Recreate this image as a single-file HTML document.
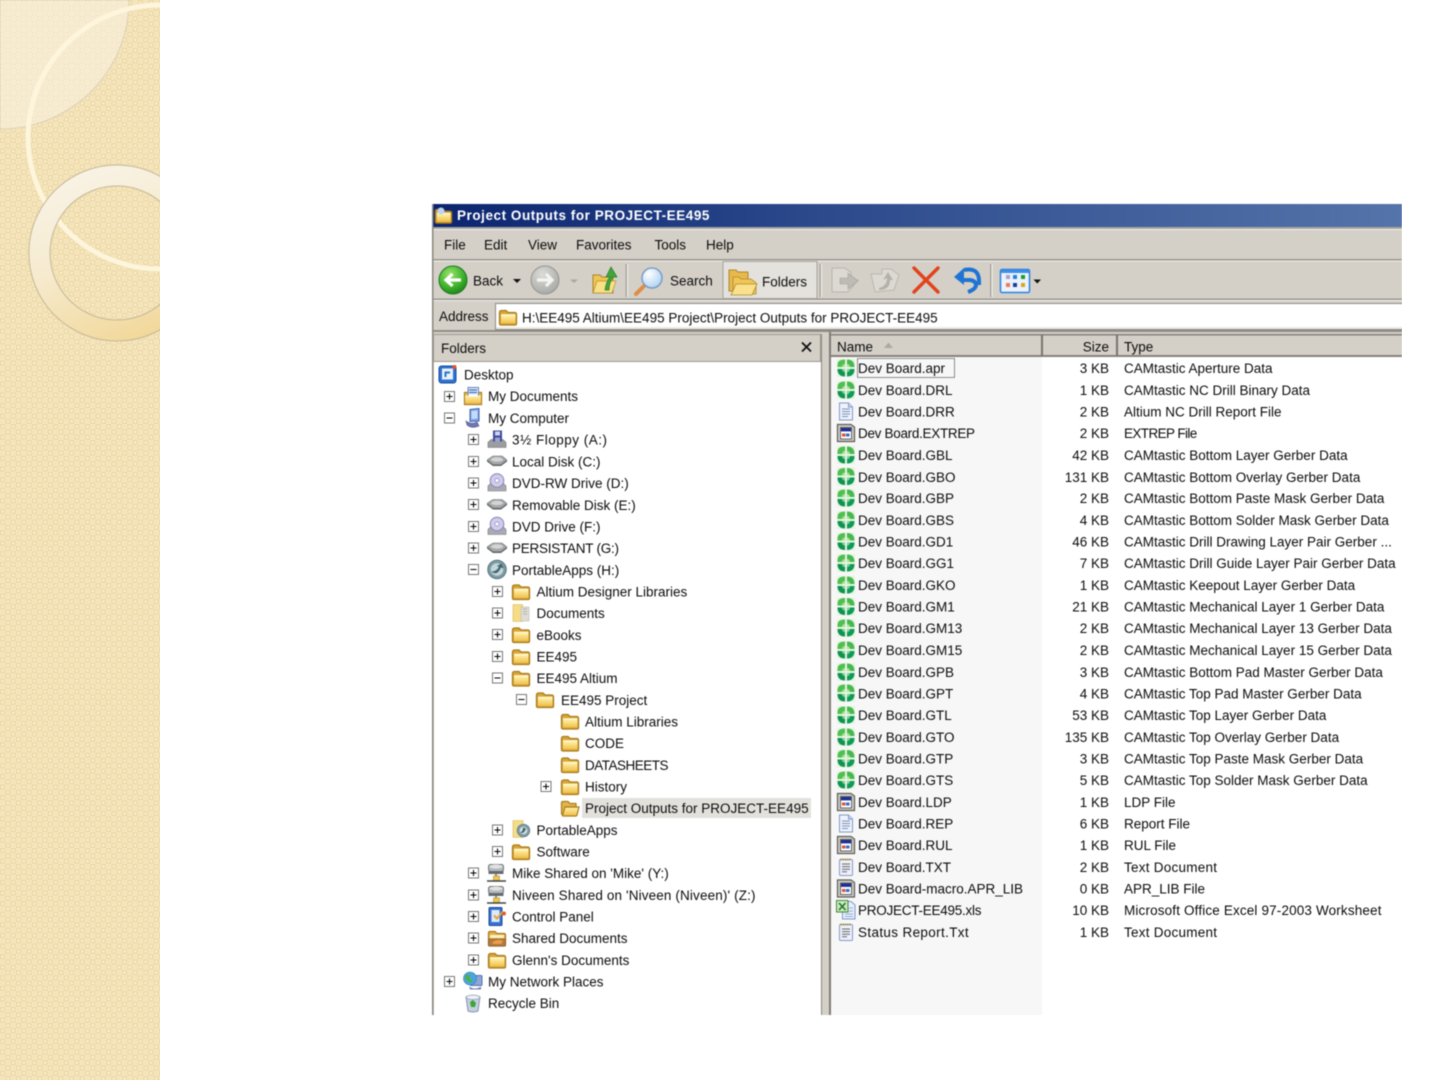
<!DOCTYPE html>
<html><head><meta charset="utf-8"><title>Project Outputs for PROJECT-EE495</title>
<style>
html,body{margin:0;padding:0;background:#fff;width:1440px;height:1080px;overflow:hidden}
svg{display:block}
text{font-family:"Liberation Sans",sans-serif;font-size:13.5px;fill:#0c0c0c;white-space:pre}
.r{text-anchor:end}
</style></head><body>
<svg width="1440" height="1080" viewBox="0 0 1440 1080" xmlns="http://www.w3.org/2000/svg">
<defs>
<filter id="soft" filterUnits="userSpaceOnUse" x="420" y="195" width="990" height="830" color-interpolation-filters="sRGB"><feGaussianBlur stdDeviation="0.4"/></filter>
<filter id="soft2" filterUnits="userSpaceOnUse" x="-5" y="-5" width="170" height="1090" color-interpolation-filters="sRGB"><feGaussianBlur stdDeviation="0.5"/></filter>
<pattern id="bg" width="10.6" height="10.6" patternUnits="userSpaceOnUse">
<rect width="10.6" height="10.6" fill="#f4e4bb"/>
<rect x="0" y="0" width="5.3" height="5.3" fill="#efdcab"/>
<rect x="5.3" y="5.3" width="5.3" height="5.3" fill="#efdcab"/>
<rect x="1.5" y="1.5" width="2.3" height="2.3" fill="#f7e9c8"/>
<rect x="6.8" y="6.8" width="2.3" height="2.3" fill="#f7e9c8"/>
</pattern>
<linearGradient id="ring" x1="0.2" y1="0" x2="0.6" y2="1"><stop offset="0" stop-color="#f9f4e8"/><stop offset=".5" stop-color="#f6ebcf"/><stop offset="1" stop-color="#f2d89a"/></linearGradient>
<linearGradient id="title" x1="0" x2="1" y1="0" y2="0"><stop offset="0" stop-color="#0b2470"/><stop offset=".4" stop-color="#2c4a8c"/><stop offset="1" stop-color="#5574aa"/></linearGradient>
<linearGradient id="fo" x1="0" y1="0" x2="0" y2="1"><stop offset="0" stop-color="#fff0a8"/><stop offset="1" stop-color="#f0bf48"/></linearGradient>
<radialGradient id="gb" cx=".4" cy=".3" r=".8"><stop offset="0" stop-color="#9be36a"/><stop offset=".6" stop-color="#3cb02c"/><stop offset="1" stop-color="#17761a"/></radialGradient>
<radialGradient id="gy" cx=".4" cy=".3" r=".8"><stop offset="0" stop-color="#dcdcd8"/><stop offset="1" stop-color="#a3a3a0"/></radialGradient>
<radialGradient id="mg" cx=".35" cy=".3" r=".8"><stop offset="0" stop-color="#ffffff"/><stop offset="1" stop-color="#a8cff2"/></radialGradient>
<pattern id="dit" width="2" height="2" patternUnits="userSpaceOnUse"><rect width="2" height="2" fill="#ecebe6"/><rect width="1" height="1" fill="#dcd9d2"/><rect x="1" y="1" width="1" height="1" fill="#dcd9d2"/></pattern>

<symbol id="p" viewBox="0 0 11 11" overflow="visible"><rect x=".5" y=".5" width="10" height="10" fill="#fff" stroke="#777"/><path d="M2.5 5.5h6M5.5 2.5v6" stroke="#000" fill="none"/></symbol>
<symbol id="m" viewBox="0 0 11 11" overflow="visible"><rect x=".5" y=".5" width="10" height="10" fill="#fff" stroke="#777"/><path d="M2.5 5.500h6" stroke="#000" fill="none"/></symbol>
<symbol id="f" viewBox="0 0 20 20"><path d="M1.500 16.500V6Q1.500 3.500 3.500 3.500H8L10 5.500H16.500Q18.500 5.500 18.500 7.500V16.500Q18.500 18 17 18H3Q1.500 18 1.500 16.500Z" fill="#d9a534" stroke="#a97c1f" stroke-width="1.300"/><path d="M3 8.500H17.500V16.500H3Z" fill="url(#fo)"/><path d="M3 8H17.500" stroke="#fff8d0" stroke-width="1.600"/></symbol>
<symbol id="fopen" viewBox="0 0 20 20"><path d="M1.500 16V5Q1.500 3.500 3 3.500H8L10 5.500H16V9H5.500L2.500 17Z" fill="#e3b548" stroke="#a97c1f" stroke-width="1.200"/><path d="M2.500 17.500 5 9H19L17 17Q16.800 18 15.500 18H3.500Q2.300 18 2.500 17.500Z" fill="url(#fo)" stroke="#a97c1f" stroke-width="1.200"/></symbol>
<symbol id="cam" viewBox="0 0 20 20"><rect x="1" y="1" width="18" height="18" fill="#e6f5e0"/><path d="M1.500 9V7Q1.500 1.500 9 1.500V9Z" fill="#4fbf4f"/><path d="M11 1.500Q18.500 1.500 18.500 9H11Z" fill="#47b84f"/><path d="M1.500 11H9V18.500Q1.500 18.500 1.500 11Z" fill="#0f9350"/><path d="M11 11H18.500Q18.500 18.500 11 18.500Z" fill="#0f9a58"/><path d="M6 9Q6 6 9 6V9ZM11 6Q14 6 14 9H11Z" fill="#a8e09a"/><path d="M6 11H9V14Q6 14 6 11ZM11 11H14Q14 14 11 14Z" fill="#7ed09a"/></symbol>
<symbol id="doc" viewBox="0 0 20 20"><path d="M3.500 1.500H12.500L16.500 5.500V18.500H3.500Z" fill="#eef3fd" stroke="#7e98ca"/><path d="M12.500 1.500V5.500H16.500" fill="#cfdaf0" stroke="#7e98ca"/><path d="M6 7.500H14M6 10H14M6 12.500H14M6 15H12" stroke="#7d90b3"/></symbol>
<symbol id="win" viewBox="0 0 20 20"><path d="M1.500 1.500H15L18.500 4V18.500H1.500Z" fill="#cfcdc6" stroke="#5c5b55" stroke-width="1.200"/><rect x="4.500" y="4.500" width="11" height="11.500" fill="#fff" stroke="#45433f" stroke-width=".8"/><rect x="5" y="5" width="10" height="3.400" fill="#1c2f96"/><rect x="6" y="10.500" width="3.500" height="3" fill="#d9523a"/><rect x="10" y="10.500" width="3.500" height="3" fill="#2c6fd4"/></symbol>
<symbol id="txt" viewBox="0 0 20 20"><rect x="3.500" y="2.500" width="13" height="16" rx="1.200" fill="#eef1fb" stroke="#8797cc"/><path d="M4.500 2.500H15.500" stroke="#a98f2c" stroke-width="2" stroke-dasharray="1.200 1"/><path d="M6 7H14M6 9.600H14M6 12.200H14M6 14.800H11" stroke="#666"/></symbol>
<symbol id="xls" viewBox="0 0 20 20"><path d="M6.500 1.500H15L19 5V19H6.500Z" fill="#e6eefb" stroke="#7d9acb"/><rect x=".5" y=".5" width="11.500" height="11.500" fill="#cfe7c3" stroke="#3c8a37"/><path d="M3 3 9.500 10M9.500 3 3 10" stroke="#1e7a22" stroke-width="1.600"/><path d="M13 8H17M13 11H17M9 14H17M9 16.500H17" stroke="#98aed4"/></symbol>
<symbol id="hdd" viewBox="0 0 20 20"><path d="M0 9 6 5H15L20 9 14 14H6Z" fill="#a4a7a9" stroke="#6e7173" stroke-width=".6"/><ellipse cx="10" cy="8.500" rx="6" ry="2.200" fill="#d4d4d4"/><path d="M0 9V10.500L6 15H14L20 10.500V9L14 13.500H6Z" fill="#5f6163"/></symbol>
<symbol id="cd" viewBox="0 0 20 20"><path d="M1 13 4 10H16L19 13V18H1Z" fill="#a9abb0" stroke="#72767c" stroke-width=".6"/><circle cx="10" cy="7.500" r="6.800" fill="#cfccec" stroke="#8583bb"/><circle cx="10" cy="7.500" r="2" fill="#fff" stroke="#8a88b8" stroke-width=".7"/></symbol>
<symbol id="flop" viewBox="0 0 20 20"><path d="M1 13 4 10H16L19 13V18H1Z" fill="#9b9da1" stroke="#6c6f74" stroke-width=".6"/><rect x="6" y="1" width="9" height="11" fill="#3f4a9c"/><rect x="8" y="2" width="5" height="4" fill="#cfd4ef"/><rect x="8" y="8" width="5" height="4" fill="#9aa2d4"/></symbol>
<symbol id="pa" viewBox="0 0 20 20"><circle cx="10" cy="10" r="9.200" fill="#7f9ba4" stroke="#55757f"/><circle cx="10" cy="10" r="6.200" fill="#c4d6d9"/><path d="M4.500 12Q10 17 14 8L16.500 9 14.500 4 10 6.500 12 7.500Q9.500 12 4.500 12Z" fill="#3f6672"/></symbol>
<symbol id="docs" viewBox="0 0 20 20"><path d="M1.500 6.500H18.500V18.500H1.500Z" fill="#eec35a" stroke="#a97c1f" stroke-width="1.200"/><rect x="5" y="1.500" width="10.500" height="10" fill="#e6eefb" stroke="#5f82bb"/><path d="M6 4H14M6 6.500H14" stroke="#3f6fb9" stroke-width="1.200"/><path d="M2 9.500H18V17.500H2Z" fill="url(#fo)"/><rect x="5.500" y="9" width="9.500" height="1.600" fill="#fff"/></symbol>
<symbol id="comp" viewBox="0 0 20 20"><path d="M7 1.500 16 .5V13L7 13.500Z" fill="#7fa7ec" stroke="#3f63ad"/><path d="M8.500 3 14.500 2.400V10.500L8.500 11Z" fill="#c7dbf9"/><path d="M3 13Q8 17 14 14L16 18Q9 21 4 17Z" fill="#6f78ae" stroke="#4e5389" stroke-width=".6"/></symbol>
<symbol id="desk" viewBox="0 0 20 20"><rect x="1" y="2" width="17" height="17" rx="2.500" fill="#2e74cf" stroke="#174a9e"/><rect x="4" y="4.500" width="11" height="11" fill="#e9f1fb"/><path d="M6.500 7.500H12V9.500H8.500V13H6.500Z" fill="#2e74cf"/><circle cx="16.500" cy="3" r="2" fill="#e0542a"/></symbol>
<symbol id="net" viewBox="0 0 20 20"><rect x="1.500" y="1.500" width="15" height="7" fill="#b6b9bd" stroke="#73777c" rx="2"/><ellipse cx="9" cy="3.500" rx="6.500" ry="2" fill="#e2e2e2"/><rect x="1.500" y="8" width="15" height="3" fill="#65696f"/><rect x="8" y="11" width="2" height="3" fill="#909090"/><rect x="6.500" y="13" width="6" height="4.500" fill="#f0c94e" stroke="#a98a24" stroke-width=".6"/><path d="M0 18H19" stroke="#444" stroke-width="1.500"/></symbol>
<symbol id="cp" viewBox="0 0 20 20"><rect x="2" y="1" width="13" height="18" fill="#3a73cf" stroke="#1c479c" rx="1"/><rect x="4.500" y="3.500" width="8" height="12" fill="#dde9fb"/><path d="M7 9 10 12 16 5" stroke="#e2a53a" stroke-width="2" fill="none"/><circle cx="17" cy="7" r="2" fill="#de5e2c"/></symbol>
<symbol id="shd" viewBox="0 0 20 20"><path d="M1.500 16.500V5Q1.500 3.500 3 3.500H8L10 5.500H17Q18.500 5.500 18.500 7V16.500Q18.500 18 17 18H3Q1.500 18 1.500 16.500Z" fill="#e2b146" stroke="#a37b28" stroke-width="1.200"/><path d="M3 7H17V10H3Z" fill="#fdf1c2"/><path d="M1.500 11H18.500V18H1.500Z" fill="#b57a3e" stroke="#7c5121" stroke-width=".6"/><path d="M5 15Q10 10 16 13L14 16H7Z" fill="#ea9e4c"/></symbol>
<symbol id="docf" viewBox="0 0 20 20"><path d="M2 1.500H11.500V18.500H2Z" fill="#f5dc85" stroke="#d7b857" stroke-width=".6"/><rect x="10" y="4" width="8" height="14" fill="#dedcd4" stroke="#bfbdb4" stroke-width=".6"/><path d="M12 6H16M12 8.500H16M12 11H16" stroke="#b5b5ad"/></symbol>
<symbol id="paf" viewBox="0 0 20 20"><path d="M2 1H12V18H2Z" fill="#f4dc8a" stroke="#d7b857" stroke-width=".6"/><circle cx="12.500" cy="11" r="6.300" fill="#7f9ba4" stroke="#55757f" stroke-width=".7"/><circle cx="12.500" cy="11" r="3.800" fill="#d5e2e4"/><path d="M9 13Q13 15 15 9L12 8Q12 12 9 13Z" fill="#3f6672"/></symbol>
<symbol id="nwp" viewBox="0 0 20 20"><rect x="7" y="4" width="12" height="10" rx="1" fill="#8ea6d8" stroke="#566fb0"/><path d="M6 15Q12 19 18 15V18H7Z" fill="#7681b4"/><circle cx="7" cy="7" r="6.500" fill="#4ba5dd" stroke="#2f7ab8" stroke-width=".6"/><path d="M3 3Q8 3 7 6T11 9L8 11Q3 10 2 6Z" fill="#4fb050"/></symbol>
<symbol id="bin" viewBox="0 0 20 20"><path d="M3 4Q10 .5 17 4L15 18Q10 20 5 18Z" fill="#c4cfdf" stroke="#8796b0"/><ellipse cx="10" cy="4.300" rx="6.800" ry="2.200" fill="#eef2f7" stroke="#93a1b9" stroke-width=".7"/><path d="M7 9 10 7 13 10 12 14H8Z" fill="#3aa63a"/></symbol>
<clipPath id="sc"><rect width="160" height="1080"/></clipPath>
</defs>

<!-- Side decoration -->
<rect x="0" y="0" width="160" height="1080" fill="url(#bg)"/>
<g clip-path="url(#sc)"><g filter="url(#soft2)">
<path d="M0 0H129A129 129 0 0 1 0 129Z" fill="#f8f1de" fill-opacity=".62" stroke="#d6cdb7" stroke-width=".8"/>
<circle cx="160" cy="137" r="132" fill="none" stroke="#fdf5dc" stroke-width="5"/>
<path fill-rule="evenodd" d="M117 165A88 88 0 1 1 116.900 165ZM117 186A67 67 0 1 0 117.100 186Z" fill="url(#ring)" stroke="#c4b797" stroke-width="1"/>
</g></g>

<!-- Window -->
<g filter="url(#soft)">
<rect x="432" y="204" width="970" height="811" fill="#d4d0c8"/>
<rect x="432" y="204" width="970" height="23" fill="url(#title)"/>
<rect x="432" y="227" width="970" height="2" fill="#a8a59f"/>
<rect x="432" y="229" width="970" height="1" fill="#f2f0ec"/>
<rect x="432" y="259" width="970" height="1.500" fill="#99968f"/>
<rect x="432" y="260.500" width="970" height="1" fill="#f4f2ee"/>
<rect x="432" y="298.500" width="970" height="1.500" fill="#99968f"/>
<rect x="432" y="300" width="970" height="1" fill="#f4f2ee"/>
<rect x="432" y="330" width="970" height="2" fill="#8f8c86"/>
<rect x="432" y="204" width="1.500" height="811" fill="#8a8780"/>

<use href="#f" x="434" y="206" width="19" height="19"/>
<circle cx="441" cy="211" r="3.500" fill="#bcd4f2"/>
<text x="457" y="220" style="font-weight:bold;fill:#fff;letter-spacing:.55px;font-size:13.500px">Project Outputs for PROJECT-EE495</text>

<text x="444" y="249.500">File</text><text x="484" y="249.500">Edit</text><text x="528" y="249.500">View</text><text x="576" y="249.500">Favorites</text><text x="654.500" y="249.500">Tools</text><text x="706" y="249.500">Help</text>

<!-- toolbar -->
<circle cx="453" cy="280" r="14" fill="url(#gb)" stroke="#1d7a1e"/>
<path d="M461 280H447M452.500 274 446 280 452.500 286" stroke="#fff" stroke-width="3.200" fill="none"/>
<text x="473" y="285.500">Back</text>
<path d="M513 279H521L517 283Z" fill="#111"/>
<circle cx="545" cy="280" r="14" fill="url(#gy)" stroke="#969692"/>
<path d="M537 280H551M546 274 552 280 546 286" stroke="#f4f4f2" stroke-width="3.200" fill="none"/>
<path d="M570 279.500H578L574 283Z" fill="#a8a8a4"/>
<path d="M593 293V275H600L602 277H613V293Z" fill="#eec452" stroke="#a8842e"/><path d="M593 293 597 281H616L612 293Z" fill="#f9df85" stroke="#b5912f" stroke-width=".7"/>
<path d="M605 290Q606 282 610 277H606L611 267 617 277H613Q609 283 609 290Z" fill="#3fa73a" stroke="#2a7a2a" stroke-width=".7"/>
<rect x="625.500" y="264" width="1.500" height="33" fill="#a9a6a0"/><rect x="627" y="264" width="1" height="33" fill="#f5f3ef"/>
<path d="M636 294 645 285" stroke="#de8d45" stroke-width="4" stroke-linecap="round"/>
<circle cx="652" cy="278" r="10" fill="url(#mg)" stroke="#7d9cc5" stroke-width="1.500"/>
<text x="670" y="285.500">Search</text>
<rect x="723" y="261.500" width="94" height="37" fill="url(#dit)" stroke="#a5a29b"/>
<path d="M729 291V270H736L738 272H748V291Z" fill="#e7b94d" stroke="#ad872e"/><path d="M733 294V277H739L741 279H751L756 283V294Z" fill="#f0c657" stroke="#ad872e" stroke-width=".8"/><path d="M731 295 736 284H757L752 295Z" fill="#fbe18b" stroke="#b08a2e" stroke-width=".8"/>
<text x="762" y="286.500">Folders</text>
<rect x="819.500" y="264" width="1.500" height="33" fill="#a9a6a0"/><rect x="821" y="264" width="1" height="33" fill="#f5f3ef"/>
<path d="M832 292V268H844L851 272V280H858L848 292Z" fill="#dcd9d2" stroke="#b8b5ae"/><path d="M840 278H848V273L858 281 848 289V284H840Z" fill="#bebbb4" stroke="#a5a29b" stroke-width=".6"/>
<path d="M871 274H882V269H891L899 275 894 290 875 292Z" fill="#dcd9d2" stroke="#bab7b0"/><path d="M879 288Q887 286 887 278L883 280 888 272 893 280H890Q890 290 879 290Z" fill="#b4b1aa"/>
<path d="M914 268 938 292M938 268 914 292" stroke="#e2421c" stroke-width="3.400" stroke-linecap="round"/>
<path d="M960 280H970Q976 281 976 285Q976 289 968 292" fill="none" stroke="#1f74d3" stroke-width="4"/><path d="M964 270Q979 267 979 281V285" fill="none" stroke="#1f74d3" stroke-width="4"/><path d="M954 277 964 268V285Z" fill="#1f74d3"/>
<rect x="990" y="264" width="1.500" height="33" fill="#a9a6a0"/><rect x="991.500" y="264" width="1" height="33" fill="#f5f3ef"/>
<rect x="1000.500" y="269.500" width="29" height="23" rx="1.500" fill="#eaf2fc" stroke="#2e81de" stroke-width="1.500"/><rect x="1001" y="270" width="28" height="3" fill="#3f8fe8"/>
<rect x="1006" y="275" width="4" height="4" fill="#a6a0d0"/><rect x="1013" y="275" width="4" height="4" fill="#2a7fe0"/><rect x="1021" y="275" width="4" height="4" fill="#17a02e"/><rect x="1006" y="283" width="4" height="4" fill="#ee7a55"/><rect x="1013" y="283" width="4" height="4" fill="#1c3e9e"/><rect x="1021" y="283" width="4" height="4" fill="#d9a520"/>
<path d="M1033.500 279.500H1041L1037.250 283.500Z" fill="#111"/>

<!-- address -->
<text x="439" y="321">Address</text>
<rect x="495.500" y="303.500" width="910" height="26" fill="#fff" stroke="#8d8a84"/>
<rect x="496" y="327" width="906" height="2" fill="#ecebe6"/>
<use href="#f" x="498" y="307" width="20" height="20"/>
<text x="522" y="322.500">H:\EE495 Altium\EE495 Project\Project Outputs for PROJECT-EE495</text>

<!-- Folder pane -->
<rect x="433.500" y="334.500" width="387" height="27" fill="#d4d0c8" stroke="#9b988f"/>
<text x="441" y="353">Folders</text>
<path d="M802 342.500 811 351.500M811 342.500 802 351.500" stroke="#111" stroke-width="1.800"/>
<rect x="434" y="362" width="387" height="653" fill="#fff"/>
<rect x="821" y="334" width="1" height="681" fill="#8a8780"/>
<rect x="822" y="332" width="7" height="683" fill="#d4d0c8"/>
<rect x="829" y="332" width="2" height="683" fill="#807d76"/>

<!-- File pane -->
<rect x="831" y="357" width="571" height="658" fill="#fff"/>
<rect x="831" y="357" width="211" height="658" fill="#f7f7f7"/>
<rect x="831" y="334" width="571" height="23" fill="#d4d0c8"/>
<rect x="831" y="334" width="571" height="1.500" fill="#85827b"/>
<rect x="831" y="355" width="571" height="2" fill="#85827b"/>
<rect x="1041" y="335" width="2" height="21" fill="#77746e"/><rect x="1116" y="335" width="2" height="21" fill="#77746e"/>
<text x="837" y="351.500">Name</text>
<path d="M884 348 888.500 342.500 893 348Z" fill="#aca9a2"/>
<text class="r" x="1109" y="351.500">Size</text>
<text x="1124" y="351.500">Type</text>
<rect x="857.500" y="358.500" width="97" height="19" fill="none" stroke="#222" stroke-dasharray="1 1"/>

<!-- Tree -->
<g id="tree">
<use href="#desk" x="438" y="364" width="20" height="20"/><text x="464" y="379.500">Desktop</text>
<use href="#p" x="444" y="391" width="11" height="11"/><use href="#docs" x="463" y="386" width="20" height="20"/><text x="488" y="401">My Documents</text>
<use href="#m" x="444" y="412.500" width="11" height="11"/><use href="#comp" x="463" y="408" width="20" height="20"/><text x="488" y="423">My Computer</text>
<use href="#p" x="468" y="434" width="11" height="11"/><use href="#flop" x="487" y="429.500" width="20" height="20"/><text x="512" y="444.500" style="letter-spacing:.5px">3½ Floppy (A:)</text>
<use href="#p" x="468" y="456" width="11" height="11"/><use href="#hdd" x="487" y="451" width="20" height="20"/><text x="512" y="466.500">Local Disk (C:)</text>
<use href="#p" x="468" y="477.500" width="11" height="11"/><use href="#cd" x="487" y="473" width="20" height="20"/><text x="512" y="488">DVD-RW Drive (D:)</text>
<use href="#p" x="468" y="499" width="11" height="11"/><use href="#hdd" x="487" y="494.500" width="20" height="20"/><text x="512" y="510">Removable Disk (E:)</text>
<use href="#p" x="468" y="521" width="11" height="11"/><use href="#cd" x="487" y="516.500" width="20" height="20"/><text x="512" y="531.500">DVD Drive (F:)</text>
<use href="#p" x="468" y="542.500" width="11" height="11"/><use href="#hdd" x="487" y="538" width="20" height="20"/><text x="512" y="553" style="letter-spacing:-.25px">PERSISTANT (G:)</text>
<use href="#m" x="468" y="564" width="11" height="11"/><use href="#pa" x="487" y="559.500" width="20" height="20"/><text x="512" y="575">PortableApps (H:)</text>
<use href="#p" x="492" y="586" width="11" height="11"/><use href="#f" x="511" y="581.500" width="20" height="20"/><text x="536.500" y="596.500">Altium Designer Libraries</text>
<use href="#p" x="492" y="607.500" width="11" height="11"/><use href="#docf" x="511" y="603" width="20" height="20"/><text x="536.500" y="618">Documents</text>
<use href="#p" x="492" y="629" width="11" height="11"/><use href="#f" x="511" y="624.500" width="20" height="20"/><text x="536.500" y="640">eBooks</text>
<use href="#p" x="492" y="651" width="11" height="11"/><use href="#f" x="511" y="646.500" width="20" height="20"/><text x="536.500" y="661.500">EE495</text>
<use href="#m" x="492" y="672.500" width="11" height="11"/><use href="#f" x="511" y="668" width="20" height="20"/><text x="536.500" y="683">EE495 Altium</text>
<use href="#m" x="516" y="694" width="11" height="11"/><use href="#f" x="535" y="689.500" width="20" height="20"/><text x="561" y="705">EE495 Project</text>
<use href="#f" x="560" y="711" width="20" height="20"/><text x="585" y="726.500">Altium Libraries</text>
<use href="#f" x="560" y="733" width="20" height="20"/><text x="585" y="748">CODE</text>
<use href="#f" x="560" y="754.500" width="20" height="20"/><text x="585" y="770" style="letter-spacing:-.5px">DATASHEETS</text>
<use href="#p" x="540.500" y="781" width="11" height="11"/><use href="#f" x="560" y="776.500" width="20" height="20"/><text x="585" y="791.500">History</text>
<rect x="582" y="798" width="229" height="20" fill="#e3e1dc"/>
<use href="#fopen" x="560" y="798" width="20" height="20"/><text x="585" y="813">Project Outputs for PROJECT-EE495</text>
<use href="#p" x="492" y="824.500" width="11" height="11"/><use href="#paf" x="511" y="819.500" width="20" height="20"/><text x="536.500" y="835">PortableApps</text>
<use href="#p" x="492" y="846" width="11" height="11"/><use href="#f" x="511" y="841.500" width="20" height="20"/><text x="536.500" y="856.500">Software</text>
<use href="#p" x="468" y="867.500" width="11" height="11"/><use href="#net" x="487" y="863" width="20" height="20"/><text x="512" y="878">Mike Shared on 'Mike' (Y:)</text>
<use href="#p" x="468" y="889.500" width="11" height="11"/><use href="#net" x="487" y="885" width="20" height="20"/><text x="512" y="900" style="letter-spacing:.13px">Niveen Shared on 'Niveen (Niveen)' (Z:)</text>
<use href="#p" x="468" y="911" width="11" height="11"/><use href="#cp" x="487" y="906.500" width="20" height="20"/><text x="512" y="921.500">Control Panel</text>
<use href="#p" x="468" y="932.500" width="11" height="11"/><use href="#shd" x="487" y="928" width="20" height="20"/><text x="512" y="943">Shared Documents</text>
<use href="#p" x="468" y="954.500" width="11" height="11"/><use href="#f" x="487" y="950" width="20" height="20"/><text x="512" y="965">Glenn's Documents</text>
<use href="#p" x="444" y="976" width="11" height="11"/><use href="#nwp" x="463" y="971.500" width="20" height="20"/><text x="488" y="986.500">My Network Places</text>
<use href="#bin" x="463" y="993" width="20" height="20"/><text x="488" y="1008">Recycle Bin</text>
</g>

<!-- Files -->
<g id="files">
<use href="#cam" x="836" y="358" width="20" height="20"/><text x="858" y="373">Dev Board.apr</text><text class="r" x="1109" y="373">3 KB</text><text x="1124" y="373">CAMtastic Aperture Data</text>
<use href="#cam" x="836" y="380" width="20" height="20"/><text x="858" y="395">Dev Board.DRL</text><text class="r" x="1109" y="395">1 KB</text><text x="1124" y="395">CAMtastic NC Drill Binary Data</text>
<use href="#doc" x="836" y="401.500" width="20" height="20"/><text x="858" y="416.500">Dev Board.DRR</text><text class="r" x="1109" y="416.500">2 KB</text><text x="1124" y="416.500">Altium NC Drill Report File</text>
<use href="#win" x="836" y="423" width="20" height="20"/><text x="858" y="438" style="letter-spacing:-.3px">Dev Board.EXTREP</text><text class="r" x="1109" y="438">2 KB</text><text x="1124" y="438" style="letter-spacing:-.6px">EXTREP File</text>
<use href="#cam" x="836" y="445" width="20" height="20"/><text x="858" y="460">Dev Board.GBL</text><text class="r" x="1109" y="460">42 KB</text><text x="1124" y="460">CAMtastic Bottom Layer Gerber Data</text>
<use href="#cam" x="836" y="466.500" width="20" height="20"/><text x="858" y="482">Dev Board.GBO</text><text class="r" x="1109" y="482">131 KB</text><text x="1124" y="482">CAMtastic Bottom Overlay Gerber Data</text>
<use href="#cam" x="836" y="488" width="20" height="20"/><text x="858" y="503">Dev Board.GBP</text><text class="r" x="1109" y="503">2 KB</text><text x="1124" y="503">CAMtastic Bottom Paste Mask Gerber Data</text>
<use href="#cam" x="836" y="510" width="20" height="20"/><text x="858" y="525">Dev Board.GBS</text><text class="r" x="1109" y="525">4 KB</text><text x="1124" y="525">CAMtastic Bottom Solder Mask Gerber Data</text>
<use href="#cam" x="836" y="531.500" width="20" height="20"/><text x="858" y="546.500">Dev Board.GD1</text><text class="r" x="1109" y="546.500">46 KB</text><text x="1124" y="546.500">CAMtastic Drill Drawing Layer Pair Gerber ...</text>
<use href="#cam" x="836" y="553" width="20" height="20"/><text x="858" y="568">Dev Board.GG1</text><text class="r" x="1109" y="568">7 KB</text><text x="1124" y="568">CAMtastic Drill Guide Layer Pair Gerber Data</text>
<use href="#cam" x="836" y="575" width="20" height="20"/><text x="858" y="590">Dev Board.GKO</text><text class="r" x="1109" y="590">1 KB</text><text x="1124" y="590">CAMtastic Keepout Layer Gerber Data</text>
<use href="#cam" x="836" y="596.500" width="20" height="20"/><text x="858" y="611.500">Dev Board.GM1</text><text class="r" x="1109" y="611.500">21 KB</text><text x="1124" y="611.500">CAMtastic Mechanical Layer 1 Gerber Data</text>
<use href="#cam" x="836" y="618" width="20" height="20"/><text x="858" y="633">Dev Board.GM13</text><text class="r" x="1109" y="633">2 KB</text><text x="1124" y="633">CAMtastic Mechanical Layer 13 Gerber Data</text>
<use href="#cam" x="836" y="640" width="20" height="20"/><text x="858" y="655">Dev Board.GM15</text><text class="r" x="1109" y="655">2 KB</text><text x="1124" y="655">CAMtastic Mechanical Layer 15 Gerber Data</text>
<use href="#cam" x="836" y="662" width="20" height="20"/><text x="858" y="677">Dev Board.GPB</text><text class="r" x="1109" y="677">3 KB</text><text x="1124" y="677">CAMtastic Bottom Pad Master Gerber Data</text>
<use href="#cam" x="836" y="683" width="20" height="20"/><text x="858" y="698.500">Dev Board.GPT</text><text class="r" x="1109" y="698.500">4 KB</text><text x="1124" y="698.500">CAMtastic Top Pad Master Gerber Data</text>
<use href="#cam" x="836" y="705" width="20" height="20"/><text x="858" y="720">Dev Board.GTL</text><text class="r" x="1109" y="720">53 KB</text><text x="1124" y="720">CAMtastic Top Layer Gerber Data</text>
<use href="#cam" x="836" y="727" width="20" height="20"/><text x="858" y="742">Dev Board.GTO</text><text class="r" x="1109" y="742">135 KB</text><text x="1124" y="742">CAMtastic Top Overlay Gerber Data</text>
<use href="#cam" x="836" y="748.500" width="20" height="20"/><text x="858" y="763.500">Dev Board.GTP</text><text class="r" x="1109" y="763.500">3 KB</text><text x="1124" y="763.500">CAMtastic Top Paste Mask Gerber Data</text>
<use href="#cam" x="836" y="770" width="20" height="20"/><text x="858" y="785">Dev Board.GTS</text><text class="r" x="1109" y="785">5 KB</text><text x="1124" y="785">CAMtastic Top Solder Mask Gerber Data</text>
<use href="#win" x="836" y="792" width="20" height="20"/><text x="858" y="807">Dev Board.LDP</text><text class="r" x="1109" y="807">1 KB</text><text x="1124" y="807">LDP File</text>
<use href="#doc" x="836" y="813.500" width="20" height="20"/><text x="858" y="828.500">Dev Board.REP</text><text class="r" x="1109" y="828.500">6 KB</text><text x="1124" y="828.500">Report File</text>
<use href="#win" x="836" y="835" width="20" height="20"/><text x="858" y="850">Dev Board.RUL</text><text class="r" x="1109" y="850">1 KB</text><text x="1124" y="850">RUL File</text>
<use href="#txt" x="836" y="857" width="20" height="20"/><text x="858" y="872">Dev Board.TXT</text><text class="r" x="1109" y="872">2 KB</text><text x="1124" y="872" style="letter-spacing:.25px">Text Document</text>
<use href="#win" x="836" y="878.500" width="20" height="20"/><text x="858" y="893.500">Dev Board-macro.APR_LIB</text><text class="r" x="1109" y="893.500">0 KB</text><text x="1124" y="893.500">APR_LIB File</text>
<use href="#xls" x="836" y="900" width="20" height="20"/><text x="858" y="915" style="letter-spacing:-.25px">PROJECT-EE495.xls</text><text class="r" x="1109" y="915">10 KB</text><text x="1124" y="915" style="letter-spacing:.15px">Microsoft Office Excel 97-2003 Worksheet</text>
<use href="#txt" x="836" y="922" width="20" height="20"/><text x="858" y="937" style="letter-spacing:.35px">Status Report.Txt</text><text class="r" x="1109" y="937">1 KB</text><text x="1124" y="937" style="letter-spacing:.25px">Text Document</text>
</g>
</g>
<rect x="1402" y="200" width="38" height="830" fill="#fff"/>
</svg>
</body></html>
